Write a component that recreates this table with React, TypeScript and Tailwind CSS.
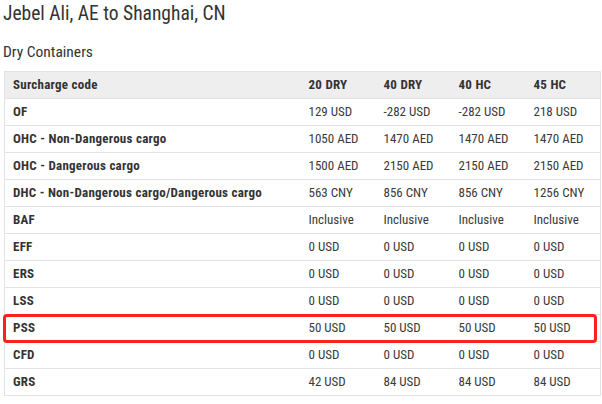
import React from "react";

type Row = { code: string; values: string[] };

const rows: Row[] = [
  { code: "OF", values: ["129 USD", "-282 USD", "-282 USD", "218 USD"] },
  { code: "OHC - Non-Dangerous cargo", values: ["1050 AED", "1470 AED", "1470 AED", "1470 AED"] },
  { code: "OHC - Dangerous cargo", values: ["1500 AED", "2150 AED", "2150 AED", "2150 AED"] },
  { code: "DHC - Non-Dangerous cargo/Dangerous cargo", values: ["563 CNY", "856 CNY", "856 CNY", "1256 CNY"] },
  { code: "BAF", values: ["Inclusive", "Inclusive", "Inclusive", "Inclusive"] },
  { code: "EFF", values: ["0 USD", "0 USD", "0 USD", "0 USD"] },
  { code: "ERS", values: ["0 USD", "0 USD", "0 USD", "0 USD"] },
  { code: "LSS", values: ["0 USD", "0 USD", "0 USD", "0 USD"] },
  { code: "PSS", values: ["50 USD", "50 USD", "50 USD", "50 USD"] },
  { code: "CFD", values: ["0 USD", "0 USD", "0 USD", "0 USD"] },
  { code: "GRS", values: ["42 USD", "84 USD", "84 USD", "84 USD"] },
];

const sizes = ["20 DRY", "40 DRY", "40 HC", "45 HC"];

export default function App() {
  return (
    <div className="relative h-[404px] w-[602px] overflow-hidden bg-white font-['Roboto',sans-serif] font-stretch-condensed text-[#333]">
      <div className="pl-[3px] pt-[2px]">
        <h1 className="text-[19.5px] leading-[24px] font-normal">Jebel Ali, AE to Shanghai, CN</h1>
        <h2 className="mt-[14px] text-[15.5px] leading-[24px] font-normal">Dry Containers</h2>
      </div>

      <div className="ml-[4px] mt-[7px] w-[596px]">
        <table className="w-full table-fixed border-collapse border border-[#e3e3e3] text-[13px]">
          <colgroup>
            <col className="w-[296px]" />
            <col className="w-[75px]" />
            <col className="w-[75px]" />
            <col className="w-[75px]" />
            <col className="w-[75px]" />
          </colgroup>
          <thead>
            <tr className="h-[27px] bg-[#eeeeee]">
              <th className="px-2 text-left font-bold tracking-[0.25px]">Surcharge code</th>
              {sizes.map((s) => (
                <th key={s} className="px-2 text-left font-bold tracking-[0.25px]">
                  {s}
                </th>
              ))}
            </tr>
          </thead>
          <tbody>
            {rows.map((r) => (
              <tr key={r.code} className="h-[27px] border-t border-[#e3e3e3]">
                <td className="px-2 font-bold whitespace-nowrap tracking-[0.25px]">{r.code}</td>
                {r.values.map((v, i) => (
                  <td key={i} className="px-2 whitespace-nowrap text-[#3a3a3a]">
                    {v}
                  </td>
                ))}
              </tr>
            ))}
          </tbody>
        </table>
      </div>

      {/* highlight around PSS row */}
      <div className="pointer-events-none absolute left-[3px] top-[314px] h-[29px] w-[594px] rounded-[4px] border-[3px] border-[#ff1f1f]" />
    </div>
  );
}
